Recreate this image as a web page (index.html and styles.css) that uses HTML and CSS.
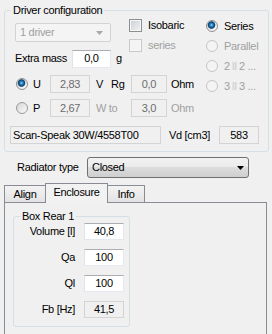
FILE: index.html
```html
<!DOCTYPE html>
<html lang="en">
<head>
  <meta charset="UTF-8" />
  <title>Driver configuration</title>
  <link rel="stylesheet" href="styles.css">
</head>
<body>
  <fieldset class="group driver">
    <legend>Driver configuration</legend>
    <div class="top">
      <div class="left">
        <div class="upper">
          <div class="stack">
            <div class="combo">
              <span>1 driver</span>
              <svg width="7" height="4" viewBox="0 0 7 4"><path d="M0 0h7L3.5 4z" fill="#a8a8a8"/></svg>
            </div>
            <div class="mass">
              <span class="mass-lbl">Extra mass</span>
              <span class="box mass-box">0,0</span>
              <span class="unit">g</span>
            </div>
          </div>
          <div class="checks">
            <div class="check"><span class="cb"></span>Isobaric</div>
            <div class="check off"><span class="cb"></span>series</div>
          </div>
        </div>
        <div class="elec">
          <span class="rb on"></span>
          <span class="sym">U</span>
          <span class="box off">2,83</span>
          <span class="unit-cell"><span class="v">V</span>Rg</span>
          <span class="box off">0,0</span>
          <span class="ohm">Ohm</span>
        </div>
        <div class="elec second">
          <span class="rb"></span>
          <span class="sym">P</span>
          <span class="box off">2,67</span>
          <span class="unit-cell grey">W to</span>
          <span class="box off">3,0</span>
          <span class="ohm grey">Ohm</span>
        </div>
      </div>
      <div class="radios">
        <div class="radio"><span class="rb on"></span>Series</div>
        <div class="radio off"><span class="rb"></span>Parallel</div>
        <div class="radio off"><span class="rb"></span>2<span class="bar">‖</span>2 ...</div>
        <div class="radio off"><span class="rb"></span>3<span class="bar">‖</span>3 ...</div>
      </div>
    </div>
    <div class="scan">
      <span class="box ro name">Scan-Speak 30W/4558T00</span>
      <span class="vd">Vd [cm3]</span>
      <span class="box ro vd-box">583</span>
    </div>
  </fieldset>

  <div class="radiator">
    <span class="radiator-lbl">Radiator type</span>
    <div class="select">
      <span>Closed</span>
      <svg width="7" height="4" viewBox="0 0 7 4"><path d="M0 0h7L3.5 4z" fill="#000"/></svg>
    </div>
  </div>

  <div class="tabs">
    <div class="tab tab-align">Align</div>
    <div class="tab tab-enc active">Enclosure</div>
    <div class="tab tab-info">Info</div>
  </div>
  <div class="panel">
    <fieldset class="group inner">
      <legend>Box Rear 1</legend>
      <div class="rows">
        <span class="row-lbl">Volume [l]</span>
        <span class="box">40,8</span>
        <span class="row-lbl">Qa</span>
        <span class="box">100</span>
        <span class="row-lbl">Ql</span>
        <span class="box">100</span>
        <span class="row-lbl">Fb [Hz]</span>
        <span class="box ro">41,5</span>
      </div>
    </fieldset>
  </div>
</body>
</html>
```

FILE: styles.css
```css
* {
  box-sizing: border-box;
}
body {
  margin: 0;
  width: 272px;
  height: 334px;
  overflow: hidden;
  background: #f0f0f0;
  font-family: 'Liberation Sans', Arial, sans-serif;
  font-size: 11px;
  line-height: 13px;
  letter-spacing: -0.3px;
  color: #000;
}
.group {
  border: 1px solid #d5dfe5;
  border-radius: 3px;
  min-inline-size: 0;
}
.group legend {
  padding: 0 2px;
  line-height: 13px;
}
.driver {
  margin: 4px 0 0 4px;
  width: 265px;
  padding: 2px 0 7px 5px;
}
.driver legend {
  margin-left: 1px;
}
.top {
  display: flex;
}
.left {
  width: 196px;
}
.upper {
  display: flex;
  height: 49px;
}
.stack {
  margin-left: 5px;
  width: 114px;
}
.combo {
  margin-top: 4px;
  width: 96px;
  height: 19px;
  display: flex;
  align-items: center;
  justify-content: space-between;
  padding: 0 7px 0 4px;
  border: 1px solid #d3d3d3;
  border-radius: 2px;
  background: #f4f4f4;
  color: #a0a0a0;
}
.mass {
  display: flex;
  align-items: center;
  margin-top: 7px;
  height: 19px;
}
.mass-lbl {
  width: 57px;
}
.mass-box {
  width: 39px;
  height: 19px;
}
.unit {
  margin-left: 5px;
}
.box {
  height: 18px;
  display: flex;
  align-items: center;
  justify-content: center;
  background: #fff;
  border: 1px solid #e3e9ef;
  border-top-color: #abadb3;
  border-left-color: #e2e3ea;
}
.box.off {
  background: #f0f0f0;
  color: #6d6d6d;
  border-color: #d4d4d4;
}
.box.ro {
  background: #f0f0f0;
  border-color: #d4d4d4;
}
.checks {
  display: flex;
  flex-direction: column;
}
.check {
  display: flex;
  align-items: center;
  height: 13px;
  margin-bottom: 7px;
}
.cb {
  width: 13px;
  height: 13px;
  margin-right: 6px;
  border: 1px solid #8e8f8f;
  background: linear-gradient(135deg, #c9ced4, #f4f4f4);
  box-shadow: inset 0 0 0 1px #f6f6f6;
}
.check.off {
  color: #a0a0a0;
}
.check.off .cb {
  border-color: #c9c9c9;
  background: #f4f4f4;
}
.rb {
  width: 12px;
  height: 12px;
  border-radius: 50%;
  border: 1px solid #8f8f8f;
  background: linear-gradient(135deg, #d6d6d6, #fbfbfb);
}
.rb.on {
  background: radial-gradient(circle at 45% 40%, #8fd8fb 0, #2a83c0 1.5px, #0f4470 3px, #3a6f94 3.6px, transparent 4.2px),
    linear-gradient(135deg, #d6d6d6, #fbfbfb);
}
.radios {
  padding-top: 1px;
}
.radio {
  display: flex;
  align-items: center;
  height: 12px;
  margin-bottom: 8px;
  white-space: pre;
}
.radio .rb {
  margin-right: 6px;
}
.radio.off {
  color: #a0a0a0;
}
.radio.off .rb {
  border-color: #c5c5c5;
  background: #f4f4f4;
}
.bar {
  margin: 0 2px;
  color: #d2d2d2;
  font-weight: bold;
}
.elec .rb:not(.on) {
  border-color: #9a9a9a;
}
.elec {
  display: grid;
  grid-template-columns: 12px 22px 40px 41px 36px auto;
  align-items: center;
  height: 18px;
  margin: 7px 0 0 6px;
}
.elec.second {
  margin-top: 6px;
}
.sym {
  padding-left: 5px;
}
.unit-cell {
  padding-left: 6px;
}
.v {
  display: inline-block;
  width: 15px;
}
.ohm {
  padding-left: 4px;
}
.grey {
  color: #a0a0a0;
}
.scan {
  display: flex;
  align-items: center;
  margin-top: 9px;
  height: 18px;
}
.name {
  width: 151px;
  justify-content: flex-start;
  padding-left: 2px;
}
.vd {
  margin-left: 8px;
  width: 50px;
}
.vd-box {
  width: 40px;
}
.radiator {
  display: flex;
  align-items: center;
  margin: 5px 0 0 17px;
  height: 21px;
}
.radiator-lbl {
  width: 70px;
}
.select {
  width: 162px;
  height: 21px;
  display: flex;
  align-items: center;
  justify-content: space-between;
  padding: 0 4px;
  border: 1px solid #707070;
  border-radius: 3px;
  background: linear-gradient(#f2f2f2, #ebebeb 45%, #dddddd 50%, #cfcfcf);
}
.tabs {
  display: flex;
  align-items: flex-end;
  margin: 5px 0 0 4px;
  height: 19px;
}
.tab {
  height: 17px;
  display: flex;
  align-items: center;
  justify-content: center;
  border: 1px solid #898c95;
  border-bottom: none;
  background: linear-gradient(#f3f3f3, #e3e3e3);
}
.tab-align {
  width: 42px;
}
.tab-enc {
  width: 63px;
}
.tab-info {
  width: 38px;
}
.tab.active {
  position: relative;
  z-index: 1;
  height: 20px;
  margin: 0 -1px -1px;
  padding-bottom: 3px;
  background: #f2f2f2;
}
.panel {
  margin-left: 4px;
  width: 263px;
  height: 140px;
  border: 1px solid #898c95;
  padding: 7px 0 0 8px;
}
.inner {
  margin: 0;
  width: 117px;
  padding: 0 0 8px 0;
}
.inner legend {
  margin-left: 6px;
}
.rows {
  display: grid;
  grid-template-columns: 61px 40px;
  column-gap: 9px;
  row-gap: 9px;
}
.rows .box {
  height: 17px;
}
.row-lbl {
  text-align: right;
  align-self: center;
}
```
